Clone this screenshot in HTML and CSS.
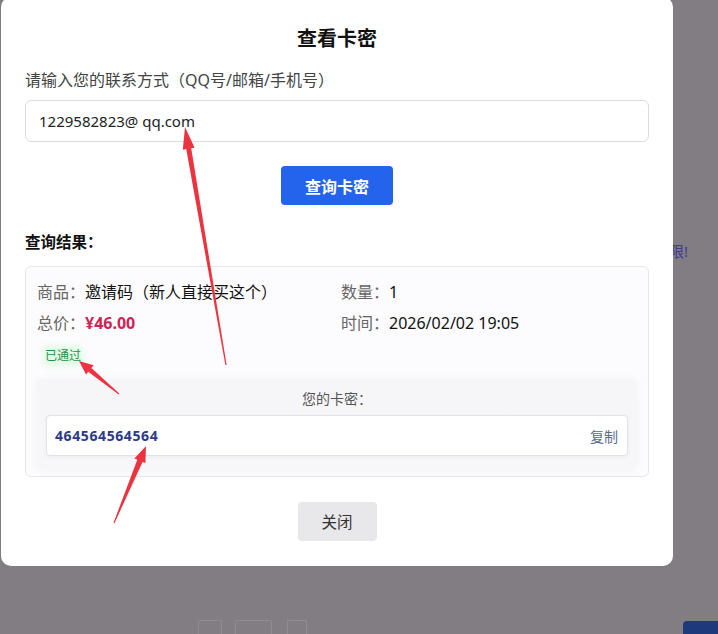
FILE: index.html
```html
<!DOCTYPE html>
<html lang="zh-CN">
<head>
<meta charset="utf-8">
<title>查看卡密</title>
<link rel="stylesheet" href="styles.css">
</head>
<body>
<div class="page">
  <div class="bg-page">
    <div class="bg-notice">请在有效期限!</div>
    <div class="bg-bottom">
      <span class="bg-box b1"></span>
      <span class="bg-box b2"></span>
      <span class="bg-box b3"></span>
      <span class="bg-btn"></span>
    </div>
  </div>

  <div class="modal">
    <h2 class="title">查看卡密</h2>
    <div class="label">请输入您的联系方式（QQ号/邮箱/手机号）</div>
    <div class="input">1229582823@ qq.com</div>
    <div class="btn-row"><button class="btn-primary">查询卡密</button></div>

    <div class="result-title">查询结果：</div>
    <div class="result">
      <div class="info">
        <div class="item"><span class="k">商品：</span><span class="v">邀请码（新人直接买这个）</span></div>
        <div class="item"><span class="k">数量：</span><span class="v">1</span></div>
        <div class="item"><span class="k">总价：</span><span class="price">¥46.00</span></div>
        <div class="item"><span class="k">时间：</span><span class="v">2026/02/02 19:05</span></div>
      </div>
      <div class="status-row"><span class="status">已通过</span></div>
      <div class="card-section">
        <div class="card-label">您的卡密：</div>
        <div class="card-box">
          <span class="card-code">464564564564</span>
          <span class="copy">复制</span>
        </div>
      </div>
    </div>

    <div class="btn-row close-row"><button class="btn-close">关闭</button></div>
  </div>

  <svg class="arrows" width="718" height="634" viewBox="0 0 718 634">
    <polygon points="185,127 194.6,147.7 191.2,148.3 226.6,364.9 225.4,365.1 186.2,149.1 182.8,149.7"/>
    <polygon points="79,361 93.6,365.3 91.4,368.0 119.3,393.6 118.7,394.4 88.2,371.8 86.0,374.5"/>
    <polygon points="146,446 145.4,463.1 142.5,461.9 114.5,523.2 113.5,522.8 137.3,459.7 134.4,458.5"/>
  </svg>
</div>
</body>
</html>
```

FILE: styles.css
```css
* { box-sizing: border-box; }

html, body {
  margin: 0;
  padding: 0;
}

body {
  background: #827d83;
  font-family: "Noto Sans", "Noto Sans CJK SC", sans-serif;
  color: #222;
  overflow: hidden;
}

.page {
  position: relative;
  width: 718px;
  height: 634px;
  overflow: hidden;
}

.bg-page {
  height: 634px;
  display: flex;
  flex-direction: column;
}

.bg-notice {
  margin-top: 241px;
  padding-right: 30px;
  text-align: right;
  font-size: 15px;
  line-height: 20px;
  color: #3e3c8c;
}

.bg-bottom {
  margin-top: auto;
  height: 14px;
  display: flex;
  align-items: flex-start;
}

.bg-box {
  height: 14px;
  border: 1px solid #908b91;
  border-bottom: none;
  border-radius: 2px 2px 0 0;
}

.b1 { width: 24px; margin-left: 198px; }
.b2 { width: 37px; margin-left: 13px; }
.b3 { width: 20px; margin-left: 15px; }

.bg-btn {
  margin-left: auto;
  margin-top: 1px;
  width: 35px;
  height: 14px;
  background: #1f3a7c;
  border-radius: 4px 0 0 0;
}

.modal {
  position: absolute;
  top: -3px;
  left: 1px;
  width: 672px;
  background: #fff;
  border-radius: 10px;
  padding: 28px 24px 25px;
}

.title {
  margin: 0;
  text-align: center;
  font-size: 20px;
  line-height: 28px;
  font-weight: 700;
  color: #111;
}

.label {
  margin-top: 16px;
  font-size: 16px;
  line-height: 22px;
  color: #444;
}

.input {
  margin-top: 9px;
  height: 42px;
  border: 1px solid #dcdcdf;
  border-radius: 6px;
  padding: 0 13px;
  font-size: 15px;
  line-height: 40px;
  color: #222;
}

.btn-row {
  display: flex;
  justify-content: center;
  margin-top: 24px;
}

.btn-primary {
  width: 112px;
  height: 39px;
  border: none;
  border-radius: 4px;
  background: #2463eb;
  color: #fff;
  font-family: inherit;
  font-size: 16px;
  font-weight: 700;
  padding: 0;
}

.result-title {
  margin-top: 25px;
  font-size: 15.5px;
  line-height: 24px;
  font-weight: 700;
  color: #111;
}

.result {
  margin-top: 12px;
  border: 1px solid #e7e6ea;
  border-radius: 6px;
  background: #fcfbfd;
  padding: 13px 11px 6px;
}

.info {
  display: grid;
  grid-template-columns: 304px 1fr;
  row-gap: 7px;
}

.item {
  font-size: 16px;
  line-height: 24px;
}

.k { color: #666; }
.v { color: #111; }

.price {
  color: #cc2553;
  font-weight: 700;
}

.status-row {
  margin-top: 13px;
  padding-left: 8px;
  display: flex;
}

.status {
  font-size: 12px;
  line-height: 16px;
  color: #23924c;
  background: #e4fbe8;
  box-shadow: 0 0 6px 2px #e0fbe5;
  border-radius: 3px;
}

.card-section {
  margin-top: 16px;
  background: linear-gradient(#f6f6f9, #f7f7fa);
  border-radius: 4px;
  padding: 10px 9px 14px;
  box-shadow: 0 0 10px #f1f3f5;
}

.card-label {
  text-align: center;
  font-size: 14px;
  line-height: 18px;
  color: #555;
}

.card-box {
  margin-top: 7px;
  height: 41px;
  background: #fff;
  border: 1px solid #e1e3e9;
  border-radius: 4px;
  box-shadow: 0 1px 4px rgba(40, 60, 90, 0.06);
  display: flex;
  align-items: center;
  justify-content: space-between;
  padding: 0 9px 0 8px;
}

.card-code {
  font-size: 14px;
  font-weight: 700;
  color: #2d3b86;
  letter-spacing: 0.6px;
}

.copy {
  font-size: 14px;
  color: #5a6b88;
}

.close-row {
  margin-top: 25px;
}

.btn-close {
  width: 79px;
  height: 39px;
  border: none;
  border-radius: 4px;
  background: #e8e7ea;
  color: #333;
  font-family: inherit;
  font-size: 15.5px;
  padding: 0;
}

.arrows {
  position: absolute;
  left: 0;
  top: 0;
  pointer-events: none;
}

.arrows polygon {
  fill: #ec3340;
}
```
